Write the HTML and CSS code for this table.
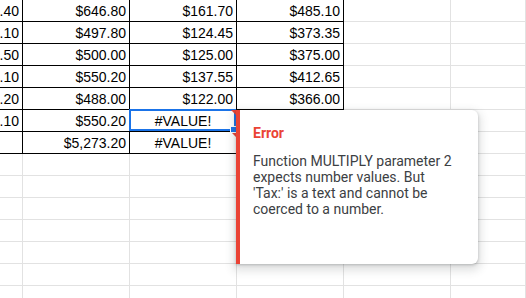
FILE: index.html
```html
<!DOCTYPE html>
<html>
<head>
<meta charset="utf-8">
<link rel="stylesheet" href="styles.css">
</head>
<body>
<div class="sheet">
  <div class="grid">
    <div class="cell dark clip"><span>$53.40</span></div><div class="cell dark num">$646.80</div><div class="cell dark num">$161.70</div><div class="cell dark num">$485.10</div><div class="cell"></div><div class="cell"></div>
    <div class="cell dark clip"><span>$49.10</span></div><div class="cell dark num">$497.80</div><div class="cell dark num">$124.45</div><div class="cell dark num">$373.35</div><div class="cell"></div><div class="cell"></div>
    <div class="cell dark clip"><span>$62.50</span></div><div class="cell dark num">$500.00</div><div class="cell dark num">$125.00</div><div class="cell dark num">$375.00</div><div class="cell"></div><div class="cell"></div>
    <div class="cell dark clip"><span>$45.10</span></div><div class="cell dark num">$550.20</div><div class="cell dark num">$137.55</div><div class="cell dark num">$412.65</div><div class="cell"></div><div class="cell"></div>
    <div class="cell dark clip"><span>$61.20</span></div><div class="cell dark num">$488.00</div><div class="cell dark num">$122.00</div><div class="cell dark num">$366.00</div><div class="cell"></div><div class="cell"></div>
    <div class="cell dark clip"><span>$55.10</span></div><div class="cell dark num">$550.20</div><div class="cell dark err sel">#VALUE!<span class="tri"></span><span class="handle"></span></div><div class="cell"></div><div class="cell"></div><div class="cell"></div>
    <div class="cell dark"></div><div class="cell dark num">$5,273.20</div><div class="cell dark err">#VALUE!<span class="tri"></span></div><div class="cell"></div><div class="cell"></div><div class="cell"></div>
    <div class="cell"></div><div class="cell"></div><div class="cell"></div><div class="cell"></div><div class="cell"></div><div class="cell"></div>
    <div class="cell"></div><div class="cell"></div><div class="cell"></div><div class="cell"></div><div class="cell"></div><div class="cell"></div>
    <div class="cell"></div><div class="cell"></div><div class="cell"></div><div class="cell"></div><div class="cell"></div><div class="cell"></div>
    <div class="cell"></div><div class="cell"></div><div class="cell"></div><div class="cell"></div><div class="cell"></div><div class="cell"></div>
    <div class="cell"></div><div class="cell"></div><div class="cell"></div><div class="cell"></div><div class="cell"></div><div class="cell"></div>
    <div class="cell"></div><div class="cell"></div><div class="cell"></div><div class="cell"></div><div class="cell"></div><div class="cell"></div>
    <div class="cell"></div><div class="cell"></div><div class="cell"></div><div class="cell"></div><div class="cell"></div><div class="cell"></div>
  </div>
  <div class="popup">
    <div class="popup-title">Error</div>
    <div class="popup-text">Function MULTIPLY parameter 2 expects number values. But 'Tax:' is a text and cannot be coerced to a number.</div>
  </div>
</div>
</body>
</html>
```

FILE: styles.css
```css
html, body {
  margin: 0;
  padding: 0;
  background: #fff;
  overflow: hidden;
  width: 526px;
  height: 298px;
}

.sheet {
  position: relative;
  width: 526px;
  height: 298px;
  overflow: hidden;
}

.grid {
  display: grid;
  grid-template-columns: 23px 107px 107px 107px 107px 1fr;
  grid-auto-rows: 22px;
}

.cell {
  box-sizing: border-box;
  border-right: 1px solid #e2e2e2;
  border-bottom: 1px solid #e2e2e2;
  padding: 1px 3px 0 3px;
  font-family: "Liberation Sans", Arial, sans-serif;
  font-size: 14px;
  line-height: 20px;
  color: #000;
  white-space: nowrap;
  overflow: hidden;
}

.dark {
  border-right-color: #000;
  border-bottom-color: #000;
}

.num {
  text-align: right;
}

.clip {
  display: flex;
  justify-content: flex-end;
}

.err {
  text-align: center;
  position: relative;
  overflow: visible;
}

.sel::after {
  content: "";
  position: absolute;
  top: -1px;
  left: -1px;
  right: 0;
  bottom: 0;
  border: 2px solid #1a73e8;
  pointer-events: none;
}

.tri {
  position: absolute;
  top: 0;
  right: 0;
  width: 0;
  height: 0;
  border-top: 5px solid #ea4335;
  border-left: 5px solid transparent;
  z-index: 2;
}

.handle {
  position: absolute;
  right: -1px;
  bottom: -2px;
  width: 5px;
  height: 5px;
  background: #1a73e8;
  border: 1px solid #fff;
  z-index: 3;
}

.popup {
  position: absolute;
  left: 236px;
  top: 110px;
  width: 242px;
  height: 154px;
  box-sizing: border-box;
  background: #fff;
  border-left: 4px solid #ea4335;
  border-radius: 0 6px 6px 0;
  box-shadow: 0 4px 8px 3px rgba(60, 64, 67, 0.15), 0 1px 3px rgba(60, 64, 67, 0.3);
  padding: 13px 12px 0 13px;
  font-family: Roboto, "Noto Sans", sans-serif;
  z-index: 5;
}

.popup-title {
  color: #ea4335;
  font-size: 14px;
  font-weight: 700;
  line-height: 20px;
  margin-bottom: 10px;
}

.popup-text {
  color: #3c4043;
  font-size: 14px;
  line-height: 16px;
  width: 202px;
}
```
